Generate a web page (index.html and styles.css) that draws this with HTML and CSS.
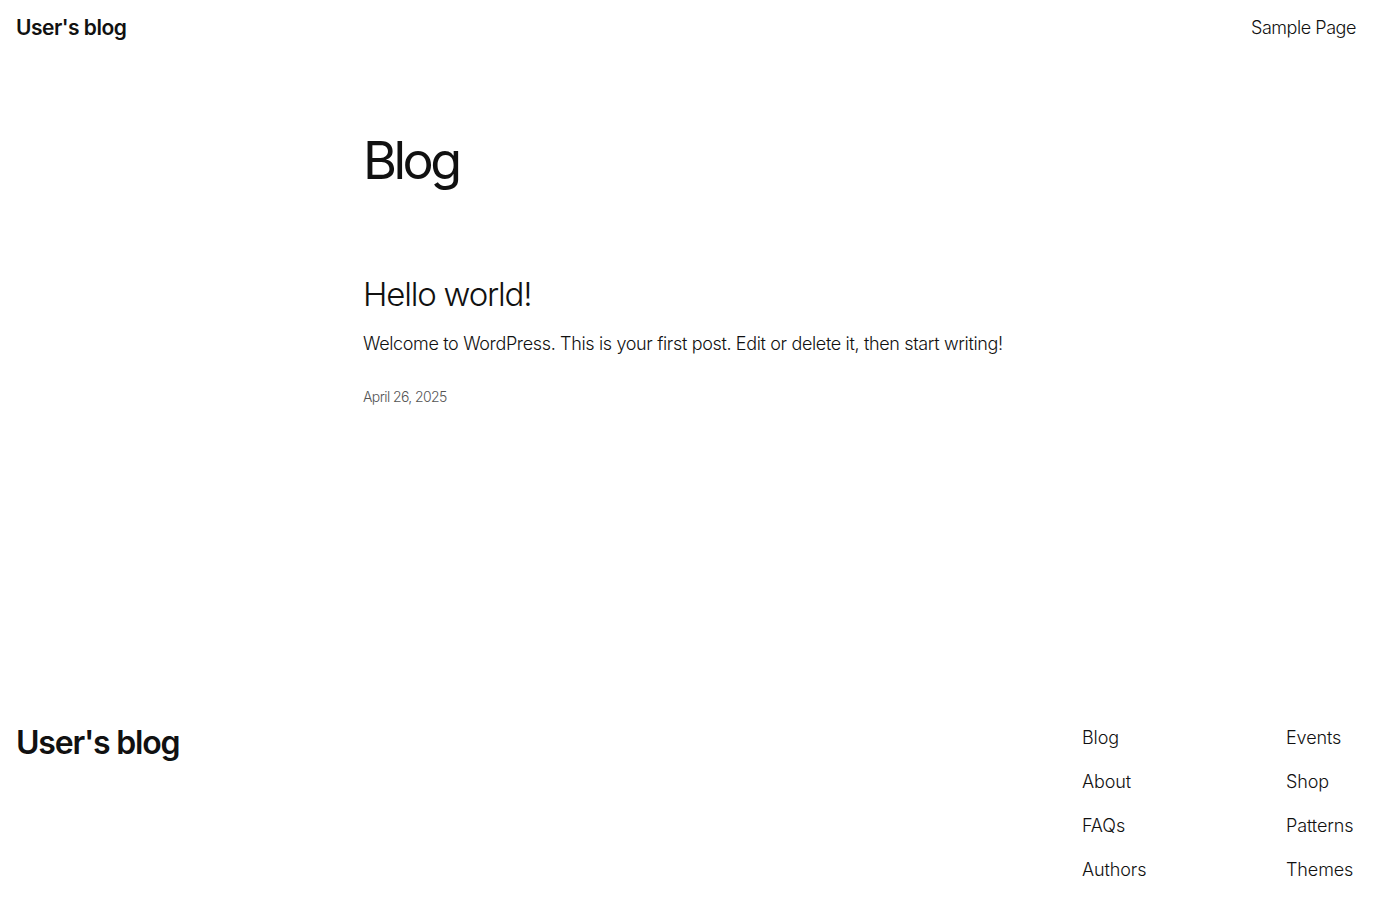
FILE: index.html
```html
<!DOCTYPE html>
<html lang="en">
<head>
<meta charset="utf-8">
<title>Blog – User's blog</title>
<link rel="stylesheet" href="styles.css">
</head>
<body>
<header class="site-header">
  <a class="site-title" href="#">User's blog</a>
  <nav class="header-nav"><a href="#">Sample Page</a></nav>
</header>
<main class="main">
  <div class="content">
    <h1 class="page-title">Blog</h1>
    <article class="post">
      <h2 class="post-title"><a href="#">Hello world!</a></h2>
      <p class="post-excerpt">Welcome to WordPress. This is your first post. Edit or delete it, then start writing!</p>
      <div class="post-date">April 26, 2025</div>
    </article>
  </div>
</main>
<footer class="site-footer">
  <a class="footer-title" href="#">User's blog</a>
  <div class="footer-nav">
    <ul class="footer-col">
      <li><a href="#">Blog</a></li>
      <li><a href="#">About</a></li>
      <li><a href="#">FAQs</a></li>
      <li><a href="#">Authors</a></li>
    </ul>
    <ul class="footer-col">
      <li><a href="#">Events</a></li>
      <li><a href="#">Shop</a></li>
      <li><a href="#">Patterns</a></li>
      <li><a href="#">Themes</a></li>
    </ul>
  </div>
</footer>
</body>
</html>
```

FILE: styles.css
```css
* { box-sizing: border-box; }
html, body { margin: 0; padding: 0; }
body {
  font-family: Inter, "Noto Sans", sans-serif;
  color: #111111;
  background: #ffffff;
  font-weight: 300;
  width: 1380px;
  height: 920px;
  overflow: hidden;
  display: flex;
  flex-direction: column;
}
a { color: inherit; text-decoration: none; }

.site-header {
  display: flex;
  justify-content: space-between;
  align-items: center;
  padding: 0 24px 0 16px;
  height: 54px;
}
.site-title {
  font-size: 21px;
  font-weight: 600;
  letter-spacing: -0.5px;
}
.header-nav {
  font-size: 18px;
  font-weight: 300;
  letter-spacing: -0.45px;
}

.main {
  flex: 1;
}
.content {
  width: 654px;
  margin: 0 auto;
}
.page-title {
  margin: 76px 0 0;
  font-size: 52px;
  font-weight: 400;
  letter-spacing: -3.5px;
  line-height: 1.2;
}
.post { margin-top: 83px; }
.post-title {
  margin: 0;
  font-size: 33px;
  font-weight: 300;
  letter-spacing: -1.2px;
  line-height: 1.2;
}
.post-excerpt {
  margin: 16px 0 0;
  font-size: 18px;
  font-weight: 300;
  letter-spacing: -0.35px;
  line-height: 1.4;
}
.post-date {
  margin-top: 32px;
  font-size: 14px;
  color: #555;
  letter-spacing: -0.6px;
}

.site-footer {
  display: flex;
  justify-content: space-between;
  align-items: flex-start;
  padding: 0 24px 0 16px;
  height: 222px;
}
.footer-title {
  font-size: 32px;
  font-weight: 600;
  letter-spacing: -1.2px;
  line-height: 1.2;
  margin-top: 26px;
}
.footer-nav {
  display: flex;
  gap: 134px;
  margin-top: 29px;
}
.footer-col {
  list-style: none;
  margin: 0;
  padding: 0;
  width: 70px;
  display: flex;
  flex-direction: column;
  gap: 22px;
  font-size: 18px;
  letter-spacing: -0.1px;
}
.footer-col li { line-height: 22px; white-space: nowrap; }
```
